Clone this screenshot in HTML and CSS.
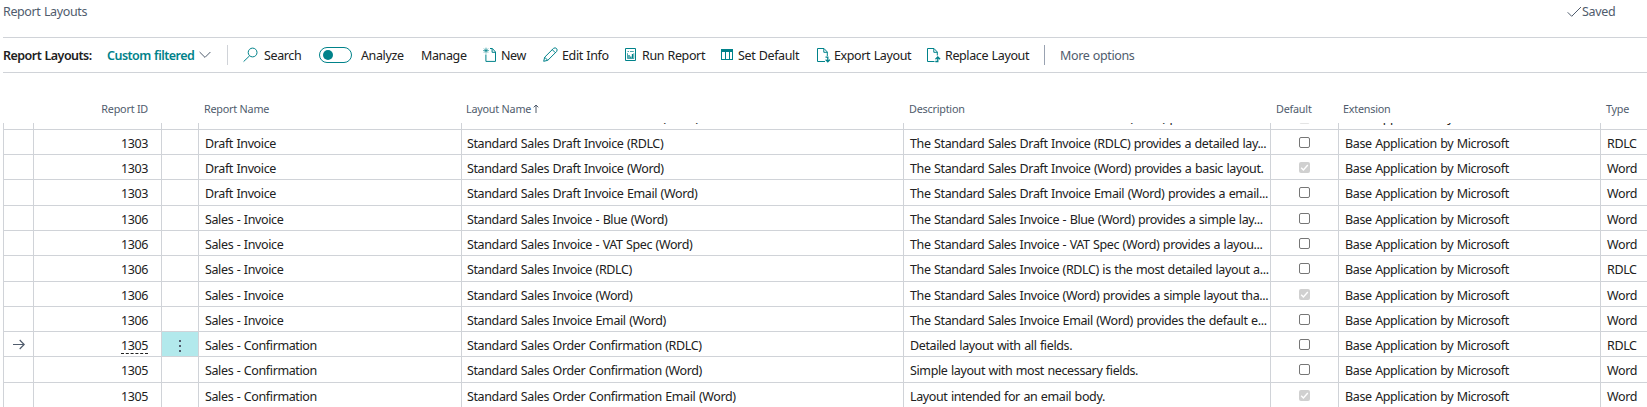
FILE: index.html
```
<!DOCTYPE html>
<html lang="en">
<head>
<meta charset="utf-8">
<title>Report Layouts</title>
<link rel="stylesheet" href="styles.css">
</head>
<body>
<header class="titlebar">
  <span class="title">Report Layouts</span>
  <span class="saved"><svg width="15" height="12" viewBox="0 0 15 12"><path d="M.7 6.3 4.7 10.3 14 1"/></svg><span>Saved</span></span>
</header>
<nav class="toolbar">
  <span class="caption">Report Layouts:</span>
  <span class="view">Custom filtered</span>
  <svg class="chevron" width="12" height="8" viewBox="0 0 12 8"><path d="M.6 1 6 6.4 11.4 1"/></svg>
  <i class="sep"></i>
  <span class="item search"><svg width="16" height="16" viewBox="0 0 16 16"><circle cx="9.6" cy="5.5" r="4.4"/><path d="M6.6 8.8.6 14.6"/></svg><span>Search</span></span>
  <span class="toggle"><i></i></span>
  <span class="item analyze"><span>Analyze</span></span>
  <span class="item manage"><span>Manage</span></span>
  <span class="item new"><svg width="15" height="16" viewBox="0 0 15 16"><path d="M2.9 7.5v6.9h9.6V5L9.4 1.5H7M9.1 1.7v3.6h3.4"/><path class="thin" d="M3 .7v5.8M.1 3.6h5.8M1 1.6l4 4M5 1.6l-4 4"/></svg><span>New</span></span>
  <span class="item edit"><svg width="16" height="16" viewBox="0 0 16 16"><path d="M.7 14.3 1.7 10.2 10.5 1.4Q12.2.2 13.5 1.5T13.6 4.5L4.8 13.3ZM9.3 2.7l3 3M1.8 10.3l2.9 3"/></svg><span>Edit Info</span></span>
  <span class="item run"><svg width="12" height="14" viewBox="0 0 12 14"><path d="M.5.5h10v12H.5z"/><path class="thin" d="M2.5 3.5h1.5M5 3.5h3.8M2.5 5.2v5.3h6.3V5.2"/><path d="M4 7v3M5.8 8.4v1.8M7.5 6v4.2" stroke-width="1.3"/></svg><span>Run Report</span></span>
  <span class="item default"><svg width="13" height="12" viewBox="0 0 13 12"><path class="crisp" d="M.5 1h11v9.5H.5zM4.5 2v9M8.5 2v9"/><path class="fill" d="M0 0h12v3H0z"/></svg><span>Set Default</span></span>
  <span class="item export"><svg width="14" height="15" viewBox="0 0 14 15"><path d="M8 13.5H.5V.5H7L10.3 4v4M6.8.8v3.5h3.5"/><path d="M8.5 9.2h2.3v4.5M8.6 11.6l2.2 2.2 2.2-2.2" stroke-width="1.3"/></svg><span>Export Layout</span></span>
  <span class="item replace"><svg width="14" height="15" viewBox="0 0 14 15"><path d="M7.5 13.5H.5V.5H7L10.3 4v3.5M6.8.8v3.5h3.5"/><path d="M8.3 13.5h2.5V9.3M8.5 11.2l2.3-2.3 2.3 2.3" stroke-width="1.3"/></svg><span>Replace Layout</span></span>
  <i class="sep dark"></i>
  <span class="more">More options</span>
</nav>
<div class="row head">
  <span></span><span class="id">Report ID</span><span></span><span>Report Name</span>
  <span>Layout Name<svg class="sort" width="6" height="9" viewBox="0 0 6 9"><path d="M3 9V1M.7 3.3 3 1l2.3 2.3"/></svg></span>
  <span>Description</span><span>Default</span><span>Extension</span><span>Type</span>
</div>
<main class="grid" id="grid"></main>
<script src="grid.js"></script>
</body>
</html>
```
FILE: styles.css
```
* { box-sizing: border-box; }
body {
  margin: 0; width: 1647px; height: 407px; overflow: hidden; background: #fff;
  font: 12.5px/18px "Noto Sans", "Open Sans", sans-serif;
  letter-spacing: -0.38px; word-spacing: .6px; color: #212121; white-space: nowrap;
}
svg { fill: none; stroke: #00828a; stroke-width: 1; flex: none; display: block; }
.thin { stroke-width: .7; }
.fill { fill: #00828a; stroke: none; }
.crisp { shape-rendering: crispEdges; }

.titlebar { height: 37px; padding: 3px 0 0 3px; display: flex; justify-content: space-between; color: #505c6d; }
.saved { display: flex; width: 80px; height: 18px; align-items: center; letter-spacing: -.3px; }
.saved svg { stroke: #505c6d; }

.toolbar {
  height: 36px; margin-left: 3px; display: flex; align-items: center;
  border-top: 1px solid #d0d3d8; border-bottom: 1px solid #d0d3d8;
}
.toolbar > * { flex: none; }
.caption, .view, .item span, .more { padding-top: 2px; }
.caption { width: 104px; font-weight: 600; letter-spacing: -.53px; }
.view { width: 92px; font-weight: 600; letter-spacing: -.53px; color: #00828a; }
.chevron { stroke: #505c6d; margin-right: 16px; }
.sep { width: 1px; height: 20px; background: #d0d3d8; margin-right: 15px; }
.sep.dark { background: #99a2b1; }
.item { display: flex; align-items: center; }
.search { width: 76px; gap: 5px; }
.toggle { width: 33px; height: 16px; border: 1px solid #00828a; border-radius: 8px; padding: 2px 3px; margin-right: 9px; }
.toggle i { display: block; width: 10px; height: 10px; border-radius: 50%; background: #00828a; }
.analyze { width: 60px; }
.manage { width: 62px; }
.new { width: 60px; gap: 3px; }
.edit { width: 82px; gap: 3px; }
.run { width: 96px; gap: 5px; }
.default { width: 96px; gap: 4px; }
.export { width: 110px; gap: 3px; }
.replace { width: 117px; gap: 4px; }
.more { color: #505c6d; }

.row {
  display: grid; margin-left: 3px; height: 25px;
  grid-template-columns: 30px 128px 37px 263px 442px 367px 68px 262px 1fr;
}
.row.tall { height: 26px; }
.head { height: 50px; padding-top: 27px; font-size: 10.8px; color: #505c6d; letter-spacing: -.22px; word-spacing: 0; }
.head span { padding-left: 6px; }
.head span:nth-child(5), .head span:nth-child(8) { padding-left: 5px; }
.head .id, .cell.id { text-align: right; padding-right: 13px; }
.sort { display: inline-block; stroke: #505c6d; margin-left: 2px; }

.grid { height: 284px; overflow: hidden; display: flex; flex-direction: column; justify-content: flex-start; }
.grid .row { flex: none; }
.grid .row:first-child { margin-top: -18px; }
.grid .row:first-child .cell { padding-top: 4px; }
.cell {
  border-left: 1px solid #d0d3d8; border-bottom: 1px solid #d0d3d8; min-width: 0;
  padding: 5px 1px 0 6px; overflow: hidden; line-height: 18px;
}
.cell:nth-child(5) { padding-left: 5px; }
.cell.id { padding-right: 13px; }
.cell.menu { display: flex; justify-content: center; padding: 8px 0 0; }
.cell.menu.on { background: #b2e9ec; }
.cell.mark { padding: 7px 0 0 9px; }
.mark svg { stroke: #505c6d; stroke-width: 1.2; }
.link { border-bottom: 1px dashed #212121; display: inline-block; line-height: 15px; }
.cell.check { padding: 7px 0 0 28px; }
.grid .row:first-child .check { padding-top: 8px; }
.grid .row:first-child .box { border-color: #e4e4e4; }
.box { display: block; width: 11px; height: 11px; border: 1px solid #767676; border-radius: 2px; }
.box.on { border: 0; background: #d0d0d0; }
.box svg { stroke: #fff; stroke-width: 1.4; }
```
FILE: grid.js
```
const rows = [
  [1303, "Draft Invoice", "Standard Sales Draft Invoice - Blue (Word)", "The Standard Sales Draft Invoice - Blue (Word) provides a b...", 0, "Word"],
  [1303, "Draft Invoice", "Standard Sales Draft Invoice (RDLC)", "The Standard Sales Draft Invoice (RDLC) provides a detailed lay...", 0, "RDLC"],
  [1303, "Draft Invoice", "Standard Sales Draft Invoice (Word)", "The Standard Sales Draft Invoice (Word) provides a basic layout.", 1, "Word"],
  [1303, "Draft Invoice", "Standard Sales Draft Invoice Email (Word)", "The Standard Sales Draft Invoice Email (Word) provides a email...", 0, "Word"],
  [1306, "Sales - Invoice", "Standard Sales Invoice - Blue (Word)", "The Standard Sales Invoice - Blue (Word) provides a simple lay...", 0, "Word"],
  [1306, "Sales - Invoice", "Standard Sales Invoice - VAT Spec (Word)", "The Standard Sales Invoice - VAT Spec (Word) provides a layou...", 0, "Word"],
  [1306, "Sales - Invoice", "Standard Sales Invoice (RDLC)", "The Standard Sales Invoice (RDLC) is the most detailed layout a...", 0, "RDLC"],
  [1306, "Sales - Invoice", "Standard Sales Invoice (Word)", "The Standard Sales Invoice (Word) provides a simple layout tha...", 1, "Word"],
  [1306, "Sales - Invoice", "Standard Sales Invoice Email (Word)", "The Standard Sales Invoice Email (Word) provides the default e...", 0, "Word"],
  [1305, "Sales - Confirmation", "Standard Sales Order Confirmation (RDLC)", "Detailed layout with all fields.", 0, "RDLC"],
  [1305, "Sales - Confirmation", "Standard Sales Order Confirmation (Word)", "Simple layout with most necessary fields.", 0, "Word"],
  [1305, "Sales - Confirmation", "Standard Sales Order Confirmation Email (Word)", "Layout intended for an email body.", 1, "Word"]
];
const current = 9;
const tall = [3, 6, 10];
const arrow = '<svg width="12" height="11" viewBox="0 0 12 11"><path d="M0 5.5h11M6.7 1l4.5 4.5L6.7 10"/></svg>';
const dots = '<svg width="2" height="12" viewBox="0 0 2 12"><path d="M1 0v2M1 5v2M1 10v2" stroke="#505c6d" stroke-width="2"/></svg>';
const tick = '<svg width="11" height="11" viewBox="0 0 11 11"><path d="M2.2 5.8 4.4 8 8.8 3"/></svg>';
document.getElementById("grid").innerHTML = rows.map(([id, name, layout, text, on, type], i) => {
  const sel = i === current;
  return `<div class="row${tall.includes(i) ? " tall" : ""}">
    <div class="cell mark">${sel ? arrow : ""}</div>
    <div class="cell id">${sel ? `<span class="link">${id}</span>` : id}</div>
    <div class="cell menu${sel ? " on" : ""}">${sel ? dots : ""}</div>
    <div class="cell">${name}</div><div class="cell">${layout}</div><div class="cell">${text}</div>
    <div class="cell check"><span class="box${on ? " on" : ""}">${on ? tick : ""}</span></div>
    <div class="cell">Base Application by Microsoft</div><div class="cell">${type}</div></div>`;
}).join("");
```
